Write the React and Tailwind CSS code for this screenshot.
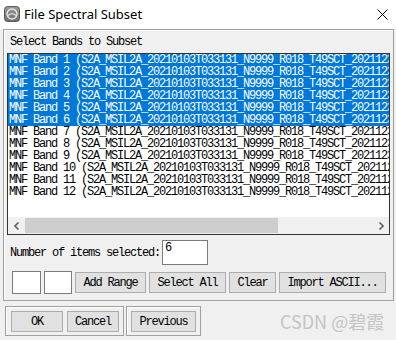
import React from "react";

const mono = { fontFamily: '"Liberation Mono", "Courier New", monospace' };

const bands = Array.from({ length: 12 }, (_, i) => i + 1);

function Btn({ w, children, className = "" }) {
  return (
    <div
      className={`h-[21px] ${w} flex items-center justify-center bg-[#e1e1e1] border border-[#adadad] text-[12px] tracking-[-1.2px] text-black leading-none ${className}`}
      style={mono}
    >
      {children}
    </div>
  );
}

export default function App() {
  return (
    <div className="w-[396px] h-[340px] bg-[#f0f0f0] relative overflow-hidden">
      {/* title bar */}
      <div className="h-[29px] bg-white flex items-center">
        <svg width="16" height="16" viewBox="0 0 16 16" className="ml-[4px] mt-[-2px]">
          <defs>
            <linearGradient id="g" x1="0" y1="0" x2="0" y2="1">
              <stop offset="0" stopColor="#9a9a9a" />
              <stop offset="1" stopColor="#6e6e6e" />
            </linearGradient>
          </defs>
          <rect x="0.5" y="0.5" width="15" height="15" rx="3" fill="url(#g)" stroke="#5a5a5a" />
          <circle cx="8" cy="8" r="5" fill="none" stroke="#e6e6e6" strokeWidth="1.4" />
          <path d="M4 9.5 Q8 6 12 9.5" fill="none" stroke="#e6e6e6" strokeWidth="1.2" />
        </svg>
        <div
          className="ml-[4px] text-[13px] text-black"
          style={{ fontFamily: '"Noto Sans", "Open Sans", sans-serif' }}
        >
          File Spectral Subset
        </div>
        <svg width="11" height="11" viewBox="0 0 11 11" className="ml-auto mr-[8px]">
          <path d="M0.5 0.5 L10.5 10.5 M10.5 0.5 L0.5 10.5" stroke="#000" strokeWidth="1" />
        </svg>
      </div>

      {/* main frame */}
      <div className="ml-[3px] w-[391px] border border-[#a0a0a0] shadow-[inset_1px_1px_0_#ffffff] px-[3px] pt-[6px] pb-[6px]">
        <div className="h-[12px] leading-[12px] pl-[3px] text-[12px] tracking-[-1.2px] text-black whitespace-nowrap" style={mono}>
          Select Bands to Subset
        </div>
        <div className="mt-[5px] w-[383px] h-[182px] border border-[#333333] bg-white flex flex-col">
          <div className="h-[163px] overflow-hidden pt-[0px]">
            {bands.map((b) => (
              <div
                key={b}
                className={`h-[12px] leading-[12px] pl-[1px] text-[12px] tracking-[-1.2px] whitespace-nowrap overflow-hidden ${
                  b <= 6 ? "bg-[#0078d7] text-white" : "text-black"
                }`}
                style={mono}
              >
                {`MNF Band ${b} (S2A_MSIL2A_20210103T033131_N9999_R018_T49SCT_20211230T095327)`}
              </div>
            ))}
          </div>
          <div className="h-[17px] bg-[#f0f0f0] flex items-center">
            <div className="w-[17px] h-[17px] flex items-center justify-center">
              <svg width="6" height="8" viewBox="0 0 6 8">
                <path d="M4.5 0.5 L1 4 L4.5 7.5" fill="none" stroke="#606060" strokeWidth="1.6" />
              </svg>
            </div>
            <div className="w-[253px] h-[15px] bg-[#cdcdcd]" />
            <div className="flex-1" />
            <div className="w-[17px] h-[17px] flex items-center justify-center">
              <svg width="6" height="8" viewBox="0 0 6 8">
                <path d="M1.5 0.5 L5 4 L1.5 7.5" fill="none" stroke="#606060" strokeWidth="1.6" />
              </svg>
            </div>
          </div>
        </div>

        <div className="mt-[5px] h-[25px] flex items-center">
          <div className="pl-[3px] text-[12px] tracking-[-1.2px] text-black whitespace-nowrap leading-none" style={mono}>
            Number of items selected:
          </div>
          <div className="ml-[2px] w-[46px] h-[25px] bg-white border border-[#7a7a7a] text-[12px] leading-[12px] pl-[2px] pt-[1px] text-black" style={mono}>
            6
          </div>
        </div>

        <div className="mt-[6px] h-[23px] flex items-center">
          <div className="ml-[5px] w-[29px] h-[23px] bg-white border border-[#7a7a7a]" />
          <div className="ml-[3px] w-[28px] h-[23px] bg-white border border-[#7a7a7a]" />
          <Btn w="w-[71px]" className="ml-[3px]">Add Range</Btn>
          <Btn w="w-[77px]" className="ml-[3px]">Select All</Btn>
          <Btn w="w-[47px]" className="ml-[3px]">Clear</Btn>
          <Btn w="w-[107px]" className="ml-[3px]">Import ASCII...</Btn>
        </div>
      </div>

      {/* bottom buttons */}
      <div className="mt-[5px] flex">
        <div className="ml-[5px] w-[119px] h-[30px] border border-[#a0a0a0] shadow-[inset_1px_1px_0_#ffffff] flex items-start pt-[4px] pl-[5px]">
          <Btn w="w-[52px]" className="h-[20px]">OK</Btn>
          <Btn w="w-[52px]" className="h-[20px] ml-[4px]">Cancel</Btn>
        </div>
        <div className="ml-[2px] w-[75px] h-[30px] border border-[#a0a0a0] shadow-[inset_1px_1px_0_#ffffff] flex items-start pt-[4px] pl-[4px]">
          <Btn w="w-[65px]" className="h-[20px]">Previous</Btn>
        </div>
      </div>

      <div
        className="absolute left-[280px] top-[308px] text-[18px] text-[#c4c4c4] whitespace-nowrap"
        style={{ fontFamily: '"Noto Sans CJK SC", "Liberation Sans", sans-serif' }}
      >
        CSDN @碧霞
      </div>
    </div>
  );
}
